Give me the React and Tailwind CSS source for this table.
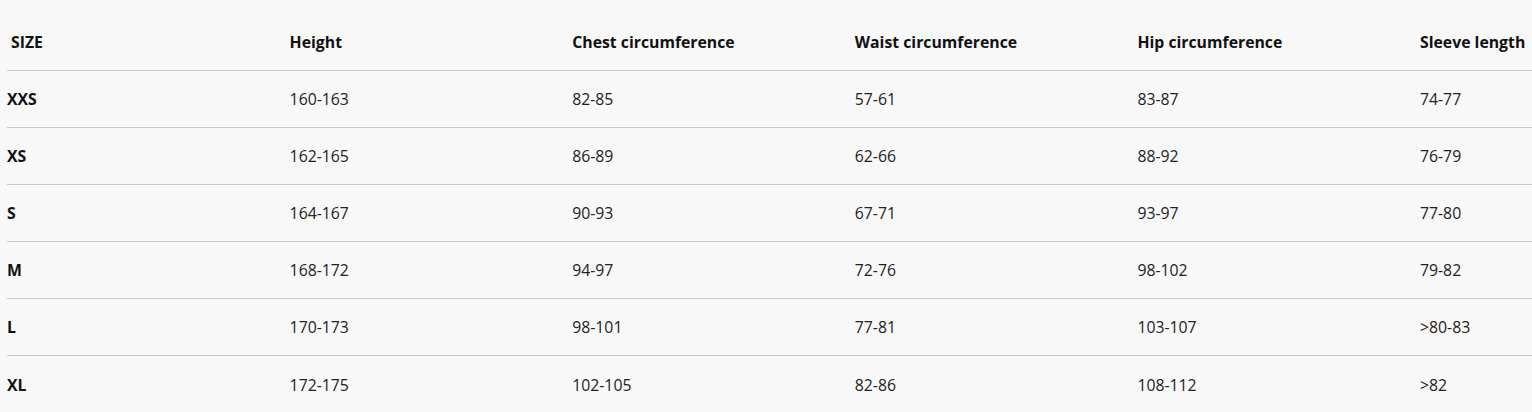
const headers = ['SIZE', 'Height', 'Chest circumference', 'Waist circumference', 'Hip circumference', 'Sleeve length'];

const rows = [
  ['XXS', '160-163', '82-85', '57-61', '83-87', '74-77'],
  ['XS', '162-165', '86-89', '62-66', '88-92', '76-79'],
  ['S', '164-167', '90-93', '67-71', '93-97', '77-80'],
  ['M', '168-172', '94-97', '72-76', '98-102', '79-82'],
  ['L', '170-173', '98-101', '77-81', '103-107', '>80-83'],
  ['XL', '172-175', '102-105', '82-86', '108-112', '>82'],
];

export default function App() {
  return (
    <div className="w-[1532px] h-[412px] overflow-hidden bg-[#f8f8f8] font-['Open_Sans',sans-serif] text-[15.8px]">
      <div className="pl-[7px] pt-[14px] w-[1710px]">
        <div className="grid grid-cols-[repeat(6,282.6px)] h-[57px] pt-[2px] items-center border-b border-[#c8c8c8] font-bold text-[#111]">
          {headers.map((h, i) => (
            <div key={h} className={i === 0 ? 'pl-1' : ''}>{h}</div>
          ))}
        </div>
        {rows.map((r, ri) => (
          <div
            key={r[0]}
            className={`grid grid-cols-[repeat(6,282.6px)] h-[57px] pt-[2px] items-center text-[#222] ${ri < rows.length - 1 ? 'border-b border-[#c8c8c8]' : ''}`}
          >
            {r.map((c, i) => (
              <div key={i} className={i === 0 ? 'font-bold text-[#111]' : ''}>{c}</div>
            ))}
          </div>
        ))}
      </div>
    </div>
  );
}
